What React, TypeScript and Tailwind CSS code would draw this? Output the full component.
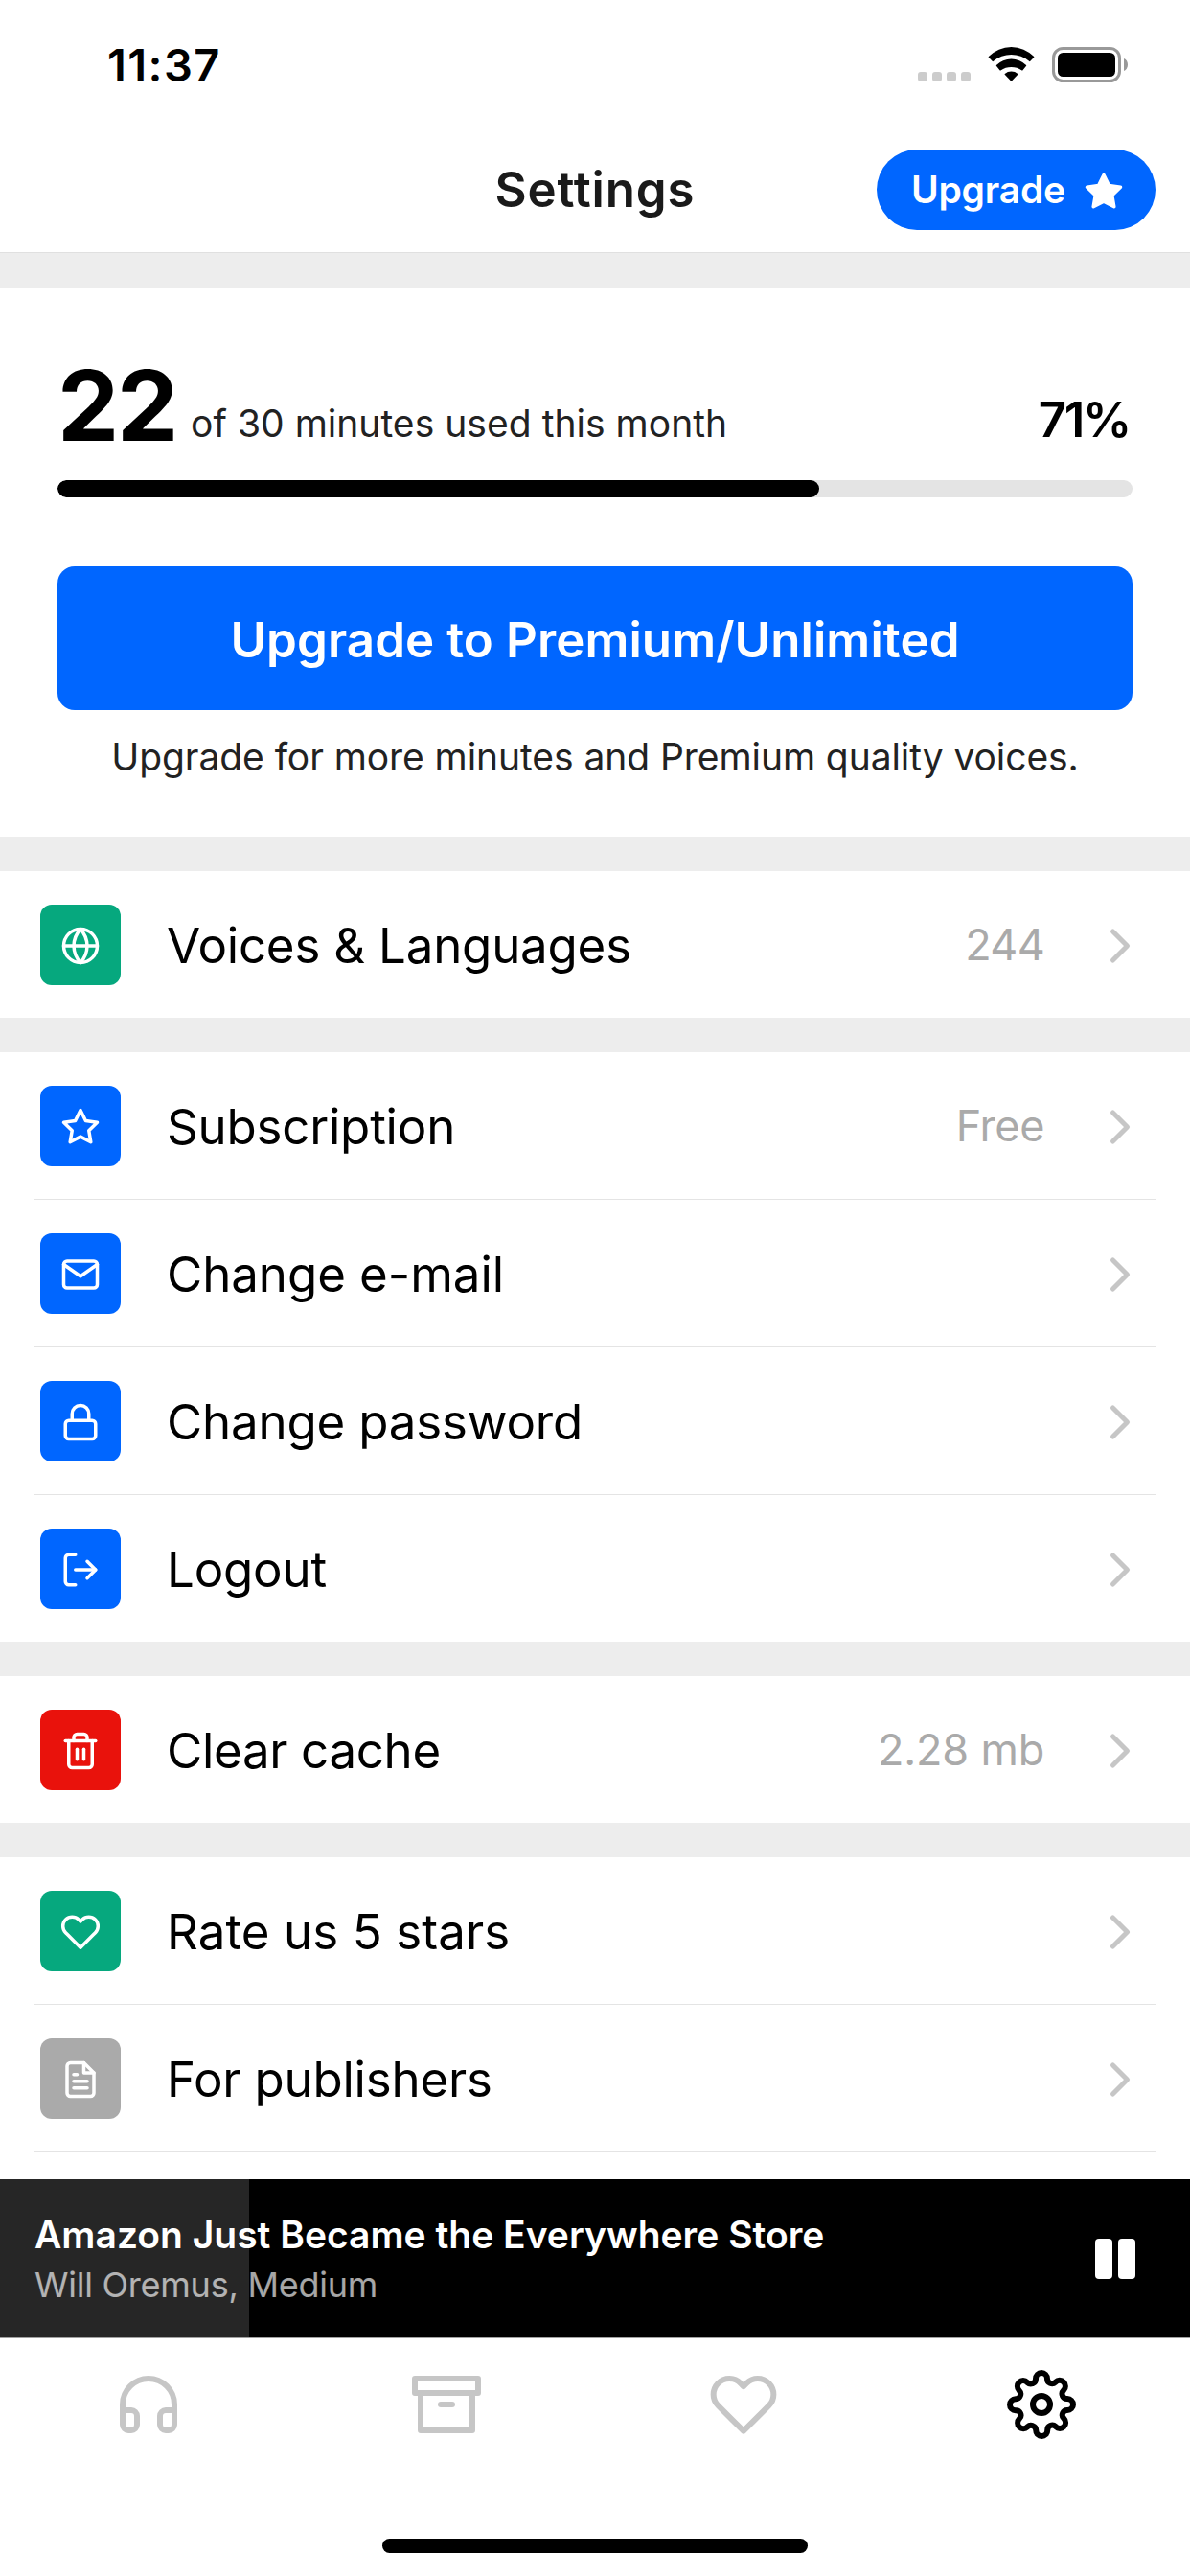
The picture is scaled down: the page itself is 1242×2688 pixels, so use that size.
import type { IconType } from "react-icons";
import {
  FiArchive,
  FiChevronRight,
  FiFileText,
  FiGlobe,
  FiHeadphones,
  FiHeart,
  FiLock,
  FiLogOut,
  FiMail,
  FiSettings,
  FiStar,
  FiTrash2,
} from "react-icons/fi";

type Item = {
  icon: IconType;
  tile: string;
  label: string;
  tracking: string;
  value?: string;
  valueTracking?: string;
};

const BLUE = "bg-[#0066ff]";
const GREEN = "bg-[#06a87e]";
const RED = "bg-[#e9120c]";
const GRAY = "bg-[#aaaaaa]";

const sections: Item[][] = [
  [
    {
      icon: FiGlobe,
      tile: GREEN,
      label: "Voices & Languages",
      tracking: "tracking-[-0.2px]",
      value: "244",
      valueTracking: "tracking-[-0.7px]",
    },
  ],
  [
    {
      icon: FiStar,
      tile: BLUE,
      label: "Subscription",
      tracking: "tracking-[-0.2px]",
      value: "Free",
      valueTracking: "tracking-[-0.4px]",
    },
    { icon: FiMail, tile: BLUE, label: "Change e-mail", tracking: "tracking-[-0.06px]" },
    { icon: FiLock, tile: BLUE, label: "Change password", tracking: "tracking-[-0.18px]" },
    { icon: FiLogOut, tile: BLUE, label: "Logout", tracking: "tracking-[-0.2px]" },
  ],
  [
    {
      icon: FiTrash2,
      tile: RED,
      label: "Clear cache",
      tracking: "tracking-[-0.32px]",
      value: "2.28 mb",
      valueTracking: "tracking-[-0.2px]",
    },
  ],
  [
    { icon: FiHeart, tile: GREEN, label: "Rate us 5 stars", tracking: "tracking-[0.1px]" },
    { icon: FiFileText, tile: GRAY, label: "For publishers", tracking: "tracking-[-0.2px]" },
  ],
];

const tabs: { icon: IconType; active?: boolean }[] = [
  { icon: FiHeadphones },
  { icon: FiArchive },
  { icon: FiHeart },
  { icon: FiSettings, active: true },
];

function StatusBar() {
  return (
    <div className="flex h-[132px] shrink-0 items-start justify-between pr-[65px] pl-[112px]">
      <span className="mt-[38px] text-[47px] leading-[60px] font-semibold tracking-[1.4px] text-black">11:37</span>
      <div className="mt-[49px] flex items-start">
        <div className="mt-[26px] mr-[18px] flex gap-[5px]">
          <span className="size-[10px] rounded-[3px] bg-[#cccccc]" />
          <span className="size-[10px] rounded-[3px] bg-[#cccccc]" />
          <span className="size-[10px] rounded-[3px] bg-[#cccccc]" />
          <span className="size-[10px] rounded-[3px] bg-[#cccccc]" />
        </div>
        <svg className="mr-[18px] h-[37px] w-[49px]" viewBox="-0.5 0 49 37" fill="#000">
          <path d="M0.3 10.1A33 33 0 0 1 47.7 10.1Q48 10.4 47.7 10.8L43.6 15Q43.3 15.3 42.9 15A29 29 0 0 0 5.1 15Q4.7 15.3 4.4 15L0.3 10.8Q0 10.4 0.3 10.1Z" />
          <path d="M8.4 19A22 22 0 0 1 39.6 19Q39.9 19.4 39.6 19.8L35.8 24.4Q35.5 24.7 35.1 24.4A20 20 0 0 0 12.9 24.4Q12.5 24.7 12.2 24.4L8.4 19.8Q8.1 19.4 8.4 19Z" />
          <path d="M17.2 27.9A11 11 0 0 1 30.8 27.9Q31.1 28.3 30.8 28.7L24.4 35.6Q24 36 23.6 35.6L17.2 28.7Q16.9 28.3 17.2 27.9Z" />
        </svg>
        <svg className="h-[37px] w-[79px]" viewBox="0 0 79 37">
          <rect x="1.5" y="1.5" width="69" height="34" rx="10" fill="none" stroke="#999" strokeWidth="3" />
          <rect x="6" y="6" width="60" height="25" rx="5.5" fill="#000" />
          <path d="M75 12C77.6 13 79 15.6 79 18.5S77.6 24 75 25Z" fill="#999" />
        </svg>
      </div>
    </div>
  );
}

function Header() {
  return (
    <header className="grid h-[132px] shrink-0 grid-cols-[1fr_auto_1fr] items-center px-9 shadow-[inset_0_-1px_0_#e0e0e0]">
      <span />
      <h1 className="text-[51px] leading-[60px] font-semibold tracking-[0.83px] text-[#1a1a1a]">Settings</h1>
      <button className="flex h-[84px] items-center justify-self-end rounded-full bg-[#0066ff] pr-[33px] pl-9 text-white">
        <span className="w-[180px] text-left text-[39px] leading-[48px] font-semibold tracking-[-0.21px]">
          Upgrade
        </span>
        <FiStar className="mt-1 size-[42px] fill-current" />
      </button>
    </header>
  );
}

function Usage() {
  return (
    <section className="h-[573px] shrink-0 px-[60px] pt-[72px]">
      <div className="flex h-[102px] items-end">
        <span className="text-[102px] leading-[102px] font-bold tracking-[-2.25px] text-black">22</span>
        <span className="mb-[2px] ml-[15px] text-[39px] leading-[60px] tracking-[0.03px] text-[#222222]">
          of 30 minutes used this month
        </span>
        <span className="mr-[3px] mb-[6px] ml-auto text-[51px] leading-[60px] font-semibold tracking-[-2.28px] text-black">
          71%
        </span>
      </div>
      <div className="mt-[27px] h-[18px] overflow-hidden rounded-full bg-[#e4e4e4]">
        <div className="h-full w-[795px] rounded-full bg-black" />
      </div>
      <button className="mt-[72px] flex h-[150px] w-full items-center justify-center rounded-[18px] bg-[#0066ff] pt-[3px] text-[51px] leading-[60px] font-semibold tracking-[0.09px] text-white">
        Upgrade to Premium/Unlimited
      </button>
      <p className="mt-[25px] text-center text-[39px] leading-[48px] tracking-[-0.07px] whitespace-nowrap text-[#222222]">
        Upgrade for more minutes and Premium quality voices.
      </p>
    </section>
  );
}

function Row({ icon: Icon, tile, label, tracking, value, valueTracking }: Item) {
  return (
    <div className="flex h-[153px] items-center pt-px pr-[43px] pl-[42px]">
      <div className={`flex size-[84px] items-center justify-center rounded-[12px] pt-[2px] text-white ${tile}`}>
        <Icon className="size-[42px]" />
      </div>
      <span className={`mt-px ml-12 text-[51px] leading-[60px] text-black ${tracking}`}>{label}</span>
      <span className={`ml-auto text-[45px] leading-[60px] text-[#aaaaaa] ${valueTracking ?? ""}`}>{value}</span>
      <FiChevronRight className="mt-px ml-[49px] size-[60px] text-[#c6c6c6]" />
    </div>
  );
}

function Player() {
  return (
    <div className="relative h-[165px] shrink-0 bg-black text-white">
      <div className="absolute inset-y-0 left-0 w-[260px] bg-[#262626]" />
      <div className="relative flex h-full justify-between pr-[57px] pl-9">
        <div className="flex flex-col gap-1 pt-[34px]">
          <span className="text-[39px] leading-[48px] font-semibold">Amazon Just Became the Everywhere Store</span>
          <span className="text-[36px] leading-[48px] tracking-[-0.24px] text-white/65">Will Oremus, Medium</span>
        </div>
        <div className="mt-[62px] flex h-[42px] gap-[6px]">
          <span className="w-[18px] rounded-[4px] bg-white" />
          <span className="w-[18px] rounded-[4px] bg-white" />
        </div>
      </div>
    </div>
  );
}

export default function App() {
  return (
    <div className="flex h-[2688px] w-[1242px] flex-col overflow-hidden bg-white font-['Inter',sans-serif] antialiased">
      <StatusBar />
      <Header />
      <main className="flex h-[2010px] shrink-0 flex-col overflow-hidden">
        <div className="h-9 shrink-0 bg-[#ededed]" />
        <Usage />
        {sections.map((items, i) => (
          <section key={i} className="shrink-0 border-t-[36px] border-[#ededed]">
            {items.map((item, j) => (
              <div key={item.label}>
                {j > 0 && <div className="mx-9 h-px bg-[#e4e4e4]" />}
                <Row {...item} />
              </div>
            ))}
          </section>
        ))}
        <div className="mx-9 h-px shrink-0 bg-[#e4e4e4]" />
      </main>
      <Player />
      <nav className="grid h-[210px] shrink-0 grid-cols-4 justify-items-center border-t border-[#a0a0a0] pt-[33px]">
        {tabs.map(({ icon: Icon, active }, i) => (
          <Icon key={i} className={`size-[72px] ${active ? "text-black" : "text-[#c6c6c6]"}`} />
        ))}
      </nav>
      <div className="mx-auto h-[15px] w-[444px] shrink-0 rounded-full bg-black" />
    </div>
  );
}
